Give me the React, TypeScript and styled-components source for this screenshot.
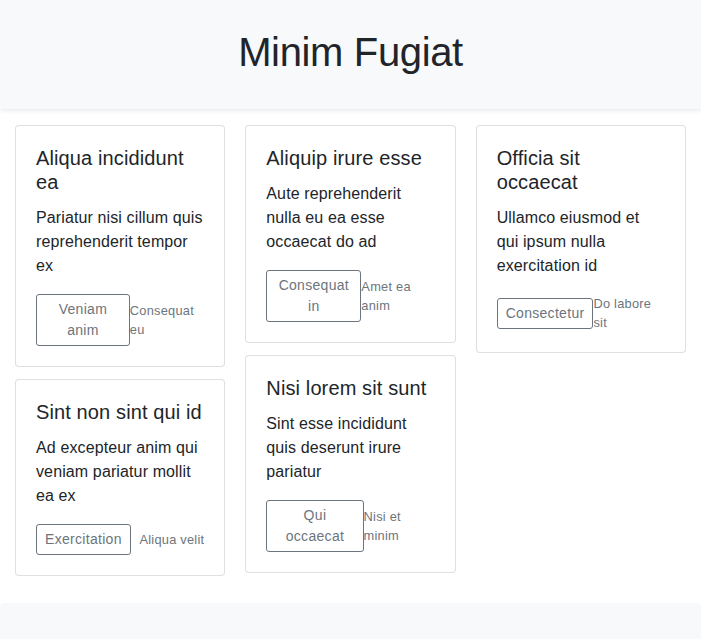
import React from "react";
import styled, { createGlobalStyle } from "styled-components";

type Item = {
  title: string;
  text: string;
  action: string;
  note: string;
};

const columns: Item[][] = [
  [
    {
      title: "Aliqua incididunt ea",
      text: "Pariatur nisi cillum quis reprehenderit tempor ex",
      action: "Veniam anim",
      note: "Consequat eu",
    },
    {
      title: "Sint non sint qui id",
      text: "Ad excepteur anim qui veniam pariatur mollit ea ex",
      action: "Exercitation",
      note: "Aliqua velit",
    },
  ],
  [
    {
      title: "Aliquip irure esse",
      text: "Aute reprehenderit nulla eu ea esse occaecat do ad",
      action: "Consequat in",
      note: "Amet ea anim",
    },
    {
      title: "Nisi lorem sit sunt",
      text: "Sint esse incididunt quis deserunt irure pariatur",
      action: "Qui occaecat",
      note: "Nisi et minim",
    },
  ],
  [
    {
      title: "Officia sit occaecat",
      text: "Ullamco eiusmod et qui ipsum nulla exercitation id",
      action: "Consectetur",
      note: "Do labore sit",
    },
  ],
];

function App() {
  return (
    <>
      <GlobalStyle />
      <Header>
        <Title>Minim Fugiat</Title>
      </Header>
      <Main>
        <CardColumns>
          {columns.flat().map((item) => (
            <Card key={item.title}>
              <CardTitle>{item.title}</CardTitle>
              <CardText>{item.text}</CardText>
              <CardFooter>
                <OutlineButton type="button">{item.action}</OutlineButton>
                <Muted>{item.note}</Muted>
              </CardFooter>
            </Card>
          ))}
        </CardColumns>
      </Main>
      <Footer />
    </>
  );
}

const GlobalStyle = createGlobalStyle`
  * {
    box-sizing: border-box;
  }

  body {
    margin: 0;
    background: #fff;
    color: #212529;
    font-family: "Helvetica Neue", "Liberation Sans", Arial, sans-serif;
    font-size: 16px;
    line-height: 1.5;
    letter-spacing: 0.12px;
  }
`;

const Header = styled.header`
  background: #f8f9fa;
  box-shadow: 0 0.125rem 0.25rem rgba(0, 0, 0, 0.075);
  padding: 28px 15px 33px;
  text-align: center;
`;

const Title = styled.h1`
  margin: 0;
  font-size: 40px;
  font-weight: 500;
  line-height: 1.2;
  letter-spacing: -0.35px;
`;

const Main = styled.main`
  padding: 16px 15px 15px;
`;

const CardColumns = styled.div`
  column-count: 3;
  column-gap: 20px;
`;

const Card = styled.div`
  display: inline-block;
  width: 100%;
  margin-bottom: 12px;
  padding: 20px;
  background: #fff;
  border: 1px solid rgba(0, 0, 0, 0.125);
  border-radius: 4px;
  break-inside: avoid;
`;

const CardTitle = styled.h5`
  margin: 0 0 12px;
  font-size: 20px;
  font-weight: 500;
  line-height: 1.2;
  letter-spacing: 0.12px;
`;

const CardText = styled.p`
  margin: 0 0 16px;
`;

const CardFooter = styled.div`
  display: flex;
  align-items: center;
  justify-content: space-between;
`;

const OutlineButton = styled.button`
  padding: 4px 8px;
  font-family: inherit;
  font-size: 14px;
  line-height: 1.5;
  letter-spacing: 0.3px;
  color: #6c757d;
  background: transparent;
  border: 1px solid #6c757d;
  border-radius: 3px;
  text-align: center;
`;

const Muted = styled.small`
  font-size: 12.8px;
  letter-spacing: 0.25px;
  color: #6c757d;
`;

const Footer = styled.footer`
  height: 60px;
  background: #f8f9fa;
  border-radius: 4px 4px 0 0;
`;

export default App;
